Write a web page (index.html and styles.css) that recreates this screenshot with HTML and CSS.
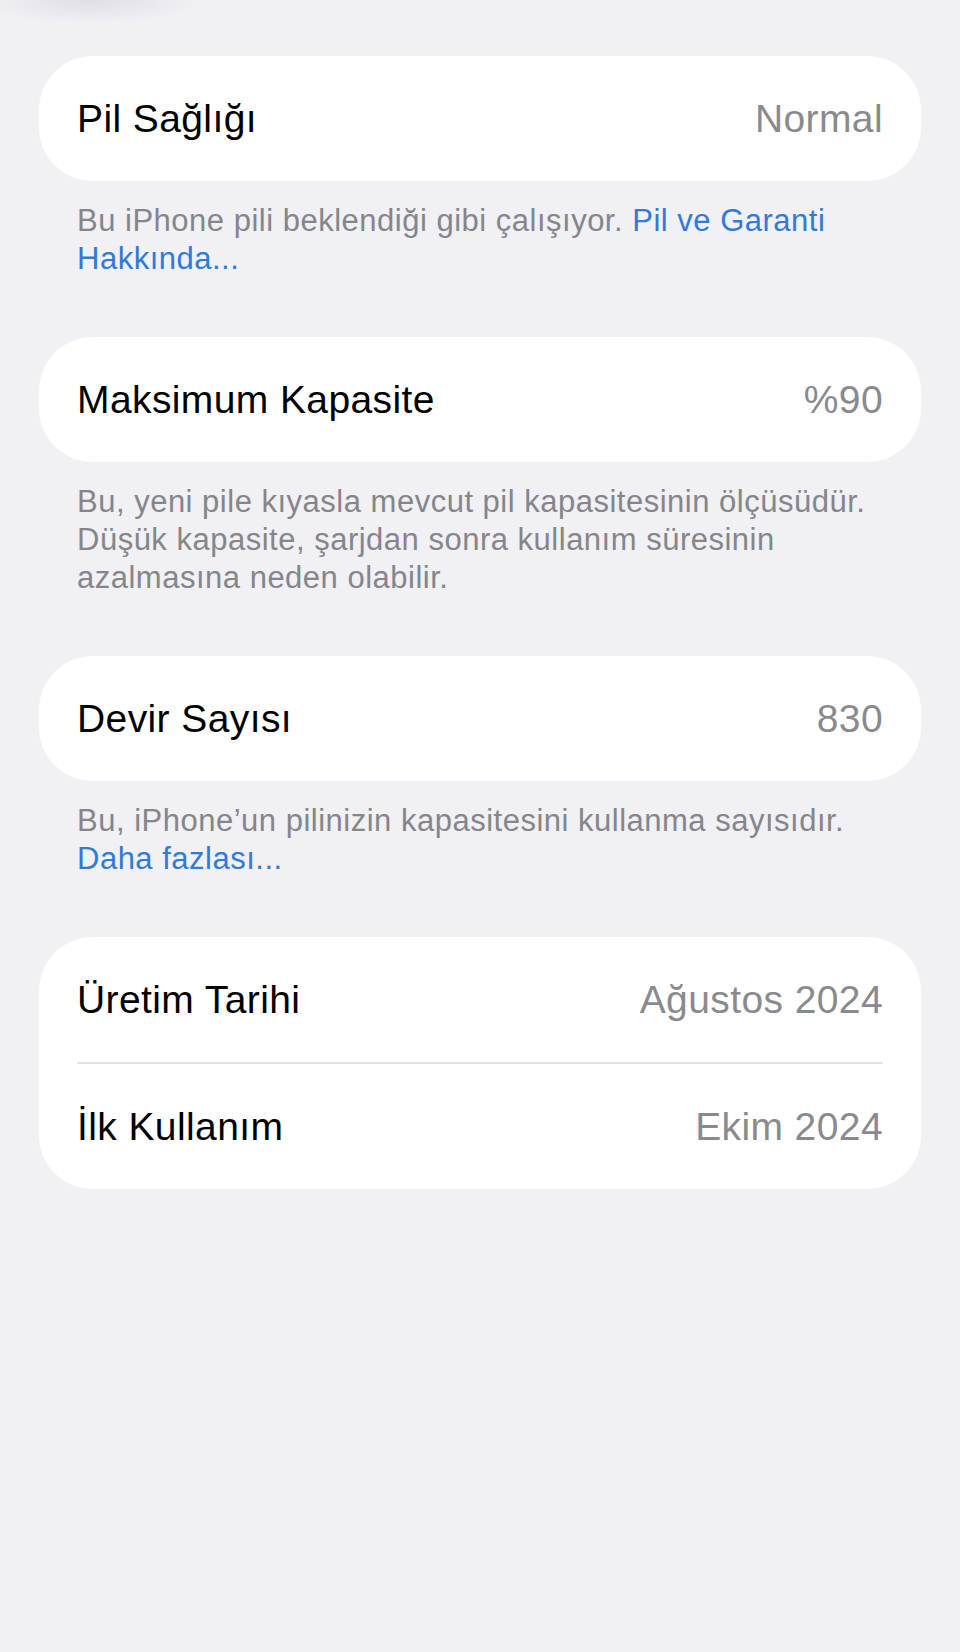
FILE: index.html
```html
<!DOCTYPE html>
<html lang="tr">
<head>
<meta charset="utf-8">
<title>Pil Sağlığı</title>
<link rel="stylesheet" href="styles.css">
</head>
<body>
<main class="page">
  <section class="group">
    <div class="card">
      <div class="row"><span class="label">Pil Sağlığı</span><span class="value">Normal</span></div>
    </div>
    <p class="footer">Bu iPhone pili beklendiği gibi çalışıyor. <a class="link" href="#">Pil ve Garanti Hakkında...</a></p>
  </section>
  <section class="group">
    <div class="card">
      <div class="row"><span class="label">Maksimum Kapasite</span><span class="value">%90</span></div>
    </div>
    <p class="footer">Bu, yeni pile kıyasla mevcut pil kapasitesinin ölçüsüdür. Düşük kapasite, şarjdan sonra kullanım süresinin azalmasına neden olabilir.</p>
  </section>
  <section class="group">
    <div class="card">
      <div class="row"><span class="label">Devir Sayısı</span><span class="value">830</span></div>
    </div>
    <p class="footer">Bu, iPhone’un pilinizin kapasitesini kullanma sayısıdır. <a class="link" href="#">Daha fazlası...</a></p>
  </section>
  <section class="group">
    <div class="card">
      <div class="row"><span class="label">Üretim Tarihi</span><span class="value">Ağustos 2024</span></div>
      <div class="row"><span class="label">İlk Kullanım</span><span class="value">Ekim 2024</span></div>
    </div>
  </section>
</main>
</body>
</html>
```

FILE: styles.css
```css
html, body {
  margin: 0;
  padding: 0;
}
body {
  width: 960px;
  min-height: 1652px;
  background-color: #f0f0f5;
  background-image: radial-gradient(ellipse 110px 24px at 90px 0px, rgba(205,205,211,0.5), rgba(240,240,245,0));
  font-family: "Liberation Sans", Arial, sans-serif;
  -webkit-font-smoothing: antialiased;
}
.page {
  display: flex;
  flex-direction: column;
  padding: 56px 39px 0 39px;
}
.group {
  display: flex;
  flex-direction: column;
  margin-bottom: 59px;
}
.card {
  background: #ffffff;
  border-radius: 54px;
  display: flex;
  flex-direction: column;
  padding: 0 38px;
}
.row {
  height: 125px;
  display: flex;
  align-items: center;
  justify-content: space-between;
  font-size: 39px;
  letter-spacing: 0.4px;
}
.row + .row {
  border-top: 2px solid #e3e3e7;
}
.label {
  color: #000000;
}
.value {
  color: #8a8a8e;
}
.footer {
  margin: 21px 0 0 0;
  padding: 0 38px;
  font-size: 31px;
  line-height: 38px;
  letter-spacing: 0.5px;
  color: #85858a;
}
.link {
  color: #2f7bd6;
  text-decoration: none;
}
```
